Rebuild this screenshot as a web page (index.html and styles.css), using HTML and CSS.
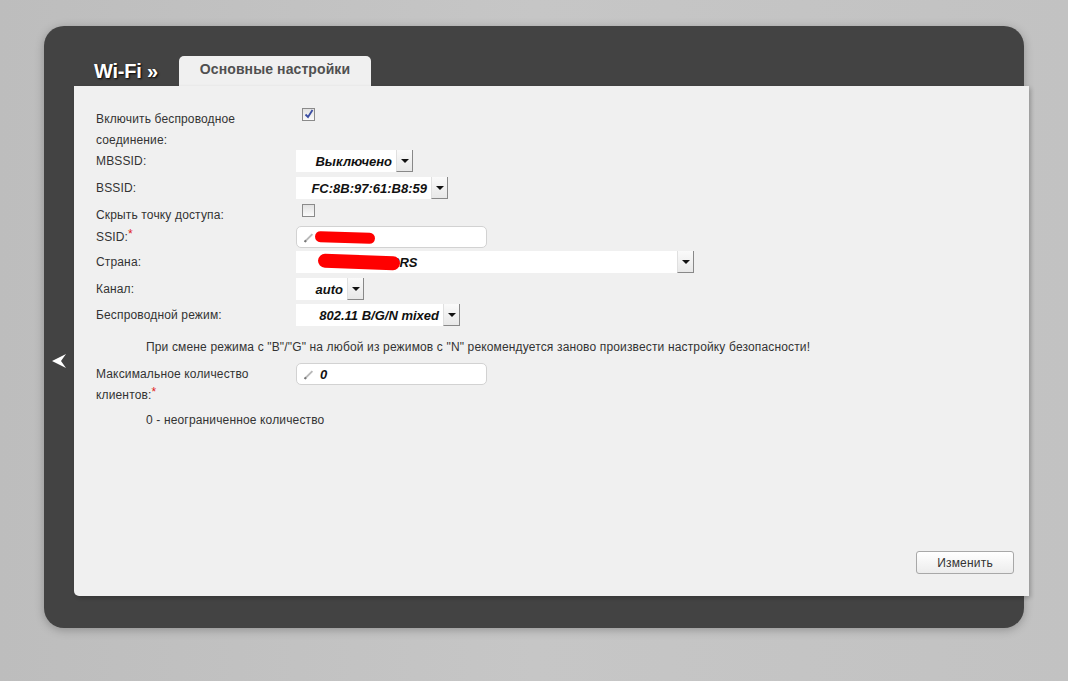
FILE: index.html
```html
<!DOCTYPE html>
<html lang="ru">
<head>
    <meta charset="UTF-8">
    <title>Wi-Fi - Основные настройки</title>
    <link rel="stylesheet" href="styles.css">
</head>
<body>
    <div class="frame">
        <!-- left gutter with back arrow -->
        <div class="gutter">
            <svg class="back-arrow" width="16" height="16" viewBox="0 0 16 16">
                <polygon points="15,1 1,8 15,15 10,8" fill="#fff"/>
            </svg>
        </div>

        <div class="main">
            <div class="header">
                <span class="crumb">Wi-Fi &raquo;</span>
                <span class="tab">Основные настройки</span>
            </div>

            <div class="panel">
                <div class="row row-double">
                    <div class="label">Включить беспроводное соединение:</div>
                    <div class="control"><span class="checkbox checked"><svg width="10" height="10" viewBox="0 0 10 10"><path d="M1.5 5.5 L4 8 L8.5 1" stroke="#3b4ea3" stroke-width="1.8" fill="none"/></svg></span></div>
                </div>
                <div class="row h27">
                    <div class="label">MBSSID:</div>
                    <div class="control"><span class="select w117"><span class="value">Выключено</span><span class="arrow"></span></span></div>
                </div>
                <div class="row h27">
                    <div class="label">BSSID:</div>
                    <div class="control"><span class="select w152"><span class="value">FC:8B:97:61:B8:59</span><span class="arrow"></span></span></div>
                </div>
                <div class="row h22">
                    <div class="label">Скрыть точку доступа:</div>
                    <div class="control"><span class="checkbox"></span></div>
                </div>
                <div class="row h25">
                    <div class="label">SSID:<span class="req">*</span></div>
                    <div class="control">
                        <span class="input"><span class="pencil"></span><span class="blot blot-ssid"></span></span>
                    </div>
                </div>
                <div class="row h27">
                    <div class="label">Страна:</div>
                    <div class="control"><span class="select w398"><span class="value left"><span class="hidden-text">RRS</span><span class="blot blot-country"></span></span><span class="arrow"></span></span></div>
                </div>
                <div class="row h26">
                    <div class="label">Канал:</div>
                    <div class="control"><span class="select w68"><span class="value">auto</span><span class="arrow"></span></span></div>
                </div>
                <div class="row h33">
                    <div class="label">Беспроводной режим:</div>
                    <div class="control"><span class="select w164"><span class="value">802.11 B/G/N mixed</span><span class="arrow"></span></span></div>
                </div>
                <p class="hint">При смене режима с "B"/"G" на любой из режимов с "N" рекомендуется заново произвести настройку безопасности!</p>
                <div class="row row-clients">
                    <div class="label">Максимальное количество<br>клиентов:<span class="req">*</span></div>
                    <div class="control">
                        <span class="input"><span class="pencil"></span><span class="input-value">0</span></span>
                    </div>
                </div>
                <p class="hint">0 - неограниченное количество</p>

                <div class="actions">
                    <button type="button" class="btn">Изменить</button>
                </div>
            </div>
        </div>
    </div>
</body>
</html>
```

FILE: styles.css
```css
/* General */
body {
    margin: 0;
    font-family: 'Liberation Sans', Arial, sans-serif;
    background: linear-gradient(90deg, #bdbdbd 0%, #c6c6c6 50%, #c2c2c2 100%);
    min-height: 681px;
}

.frame {
    position: relative;
    display: flex;
    margin: 26px 0 0 44px;
    width: 980px;
    height: 602px;
    padding: 30px 0 32px;
    box-sizing: border-box;
    background-color: #434343;
    border-radius: 20px;
    box-shadow: 0 2px 10px rgba(0, 0, 0, 0.25);
}

.gutter {
    width: 30px;
    flex-shrink: 0;
    padding-top: 297px;
    padding-left: 7px;
    box-sizing: border-box;
}

.back-arrow {
    display: block;
}

.main {
    display: flex;
    flex-direction: column;
    flex-shrink: 0;
    width: 955px;
}

/* Header with breadcrumb + tab */
.header {
    display: flex;
    align-items: flex-end;
    height: 30px;
}

.crumb {
    width: 105px;
    padding-left: 20px;
    box-sizing: border-box;
    align-self: center;
    font-size: 20px;
    font-weight: bold;
    color: #fff;
    text-shadow: 1px 1px 2px #000;
    letter-spacing: -0.2px;
}

.tab {
    width: 192px;
    height: 30px;
    line-height: 27px;
    text-align: center;
    background-color: #f0f0f0;
    border-radius: 5px 5px 0 0;
    font-size: 14px;
    font-weight: bold;
    color: #505050;
    letter-spacing: 0.1px;
}

/* Content panel */
.panel {
    display: flex;
    flex-direction: column;
    height: 510px;
    padding: 22px 15px 22px 22px;
    box-sizing: border-box;
    background-color: #f0f0f0;
    border-radius: 0 0 0 5px;
    box-shadow: 2px 2px 4px rgba(0, 0, 0, 0.2);
    font-size: 12px;
    letter-spacing: 0.15px;
    color: #333;
}

.row {
    display: flex;
}

.row-double { height: 42px; }
.row-clients { height: 47px; }
.h22 { height: 22px; }
.h25 { height: 25px; }
.h26 { height: 26px; }
.h27 { height: 27px; }
.h33 { height: 33px; }

.label {
    width: 200px;
    padding: 1px 40px 0 0;
    box-sizing: border-box;
    line-height: 21px;
}

.req {
    color: #e02020;
    font-size: 12px;
    vertical-align: top;
    line-height: 14px;
}

.control {
    flex: 1;
}

/* Checkbox */
.checkbox {
    display: block;
    width: 11px;
    height: 11px;
    margin: 0 0 0 6px;
    border: 1px solid #8a8a8a;
    background: linear-gradient(#e2e2e2, #fafafa);
}

.checkbox svg {
    display: block;
    margin: 0 0 0 1px;
}

/* Select */
.select {
    display: flex;
    height: 22px;
    background-color: #fff;
}

.w68 { width: 68px; }
.w117 { width: 117px; }
.w152 { width: 152px; }
.w164 { width: 164px; }
.w398 { width: 398px; }

.select .value {
    flex: 1;
    text-align: right;
    padding-right: 4px;
    line-height: 24px;
    font-size: 13px;
    font-weight: bold;
    font-style: italic;
    letter-spacing: 0;
    color: #111;
    white-space: nowrap;
}

.select .value.left {
    position: relative;
    text-align: left;
    padding-left: 22px;
}

.select .arrow {
    position: relative;
    width: 15px;
    height: 21px;
    background: linear-gradient(#fafafa, #e8e8e8);
    border-left: 1px solid #e0e0e0;
    border-right: 1px solid #888;
    border-bottom: 1px solid #888;
}

.select .arrow::after {
    content: "";
    position: absolute;
    left: 4px;
    top: 9px;
    border-left: 4px solid transparent;
    border-right: 4px solid transparent;
    border-top: 4px solid #111;
}

/* Text input */
.input {
    position: relative;
    display: flex;
    align-items: center;
    width: 191px;
    height: 22px;
    box-sizing: border-box;
    background-color: #fff;
    border: 1px solid #d2d2d2;
    border-radius: 5px;
}

.pencil {
    width: 9px;
    height: 2px;
    margin: 2px 4px 0 6px;
    background-color: #b8b8b8;
    transform: rotate(-45deg);
    border-left: 2px solid #777;
}

.input-value {
    font-size: 13px;
    font-weight: bold;
    font-style: italic;
    color: #111;
    padding-left: 2px;
}

/* redacted data */
.blot {
    display: inline-block;
    background-color: #f00;
    border-radius: 7px;
}

.blot-ssid {
    width: 60px;
    height: 11px;
    margin-left: -3px;
    margin-top: 1px;
    transform: rotate(2deg);
}

.blot-country {
    position: absolute;
    left: 22px;
    top: 4px;
    width: 82px;
    height: 14px;
    transform: rotate(2deg);
}

.hidden-text {
    display: inline-block;
    padding-left: 72px;
    font-size: 13px;
}

.hint {
    margin: 0 0 5px;
    padding-left: 50px;
    line-height: 21px;
}

/* Buttons */
.actions {
    margin-top: auto;
    display: flex;
    justify-content: flex-end;
}

.btn {
    width: 98px;
    height: 23px;
    padding: 0;
    font-family: 'Liberation Sans', Arial, sans-serif;
    font-size: 12px;
    letter-spacing: 0.2px;
    color: #333;
    background: linear-gradient(#ffffff, #ececec);
    border: 1px solid #a8a8a8;
    border-radius: 3px;
    cursor: pointer;
}

.btn:hover {
    background: linear-gradient(#ffffff, #e0e0e0);
}
```
